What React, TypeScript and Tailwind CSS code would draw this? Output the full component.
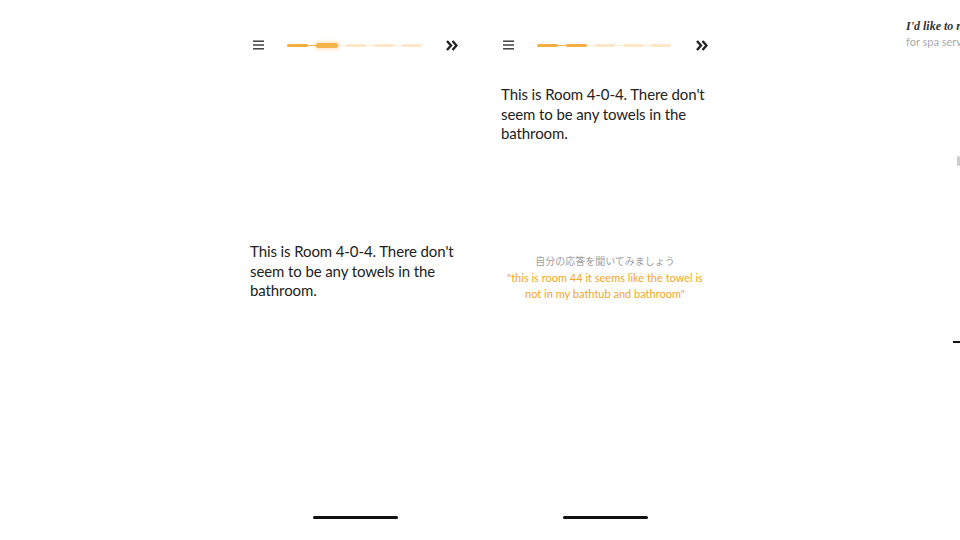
import React from "react";

const font = { fontFamily: "Lato, 'Noto Sans CJK JP', sans-serif" };

function Hamburger() {
  return (
    <svg width="11" height="10" viewBox="0 0 11 10" className="block">
      <rect x="0" y="0.5" width="11" height="1.4" fill="#333" />
      <rect x="0" y="4.3" width="11" height="1.4" fill="#333" />
      <rect x="0" y="8.1" width="11" height="1.4" fill="#333" />
    </svg>
  );
}

function Chevrons() {
  return (
    <svg width="12" height="11" viewBox="0 0 12 11" className="block">
      <path d="M1 1 L5 5.5 L1 10" stroke="#222" strokeWidth="2.4" fill="none" strokeLinejoin="miter" />
      <path d="M6.5 1 L10.5 5.5 L6.5 10" stroke="#222" strokeWidth="2.4" fill="none" strokeLinejoin="miter" />
    </svg>
  );
}

function Progress({ done, glow }: { done: number; glow: boolean }) {
  const segs = [0, 1, 2, 3, 4];
  return (
    <div className="flex items-center w-[136px]">
      {segs.map((i) => (
        <React.Fragment key={i}>
          {i > 0 && (
            <div
              className={
                i < done
                  ? "h-[1px] w-[8px] bg-[#f7b54a]"
                  : "h-[1px] w-[8px] bg-[#fdebd2]"
              }
            />
          )}
          <div
            className={
              i < done
                ? glow && i === done - 1
                  ? "h-[5px] w-[22px] rounded-full bg-[#f6b24a] shadow-[0_0_3px_2px_rgba(247,180,80,0.3)]"
                  : "h-[3px] w-[21px] rounded-full bg-[#f5ae3f]"
                : "h-[3px] w-[20px] rounded-full bg-[#fde7c8]"
            }
          />
        </React.Fragment>
      ))}
    </div>
  );
}

function Header({ done, glow }: { done: number; glow: boolean }) {
  return (
    <div className="flex items-center h-[20px] mt-[35px] pl-[23px]">
      <Hamburger />
      <div className="ml-[23px]">
        <Progress done={done} glow={glow} />
      </div>
      <div className="ml-[23px]">
        <Chevrons />
      </div>
    </div>
  );
}

function HomeBar() {
  return (
    <div className="flex justify-center mt-auto mb-[21px]">
      <div className="h-[3px] w-[85px] rounded-full bg-[#111]" />
    </div>
  );
}

const bodyText = "This is Room 4-0-4. There don't seem to be any towels in the bathroom.";

export default function App() {
  return (
    <div className="w-[960px] h-[540px] bg-white overflow-hidden flex" style={font}>
      <div className="w-[230px] shrink-0" />
      {/* Screen 1 */}
      <div className="w-[250px] h-[540px] shrink-0 flex flex-col">
        <Header done={2} glow={true} />
        <p className="mt-[187px] pl-[20px] pr-[14px] text-[15px] leading-[19.5px] tracking-[-0.1px] text-[#222]">
          {bodyText}
        </p>
        <HomeBar />
      </div>
      {/* Screen 2 */}
      <div className="w-[250px] h-[540px] shrink-0 flex flex-col">
        <Header done={2} glow={false} />
        <p className="mt-[30px] pl-[21px] pr-[14px] text-[15px] leading-[19.5px] tracking-[-0.1px] text-[#222]">
          {bodyText}
        </p>
        <div className="mt-[110px] flex flex-col items-center text-center">
          <p className="text-[10px] leading-[14px] text-[#a0a0a0]">自分の応答を聞いてみましょう</p>
          <p className="mt-[2px] text-[11px] leading-[16px] text-[#f5a623] w-[210px]">
            "this is room 44 it seems like the towel is not in my bathtub and bathroom"
          </p>
        </div>
        <HomeBar />
      </div>
      {/* Screen 3 (partial) */}
      <div className="w-[230px] h-[540px] shrink-0 flex flex-col">
        <div className="mt-[19px] pl-[176px] whitespace-nowrap">
          <p className="text-[12px] leading-[14px] font-bold italic text-[#333]" style={{ fontFamily: "'Liberation Serif', serif" }}>
            I'd like to request
          </p>
          <p className="mt-[2px] text-[11px] leading-[14px] text-[#aaa]">for spa service</p>
        </div>
        <div className="mt-[107px] pl-[227px]">
          <div className="h-[10px] w-[3px] rounded-sm bg-[#ccc]" />
        </div>
        <div className="mt-[175px] pl-[223px]">
          <div className="h-[2px] w-[10px] bg-[#111]" />
        </div>
      </div>
    </div>
  );
}
